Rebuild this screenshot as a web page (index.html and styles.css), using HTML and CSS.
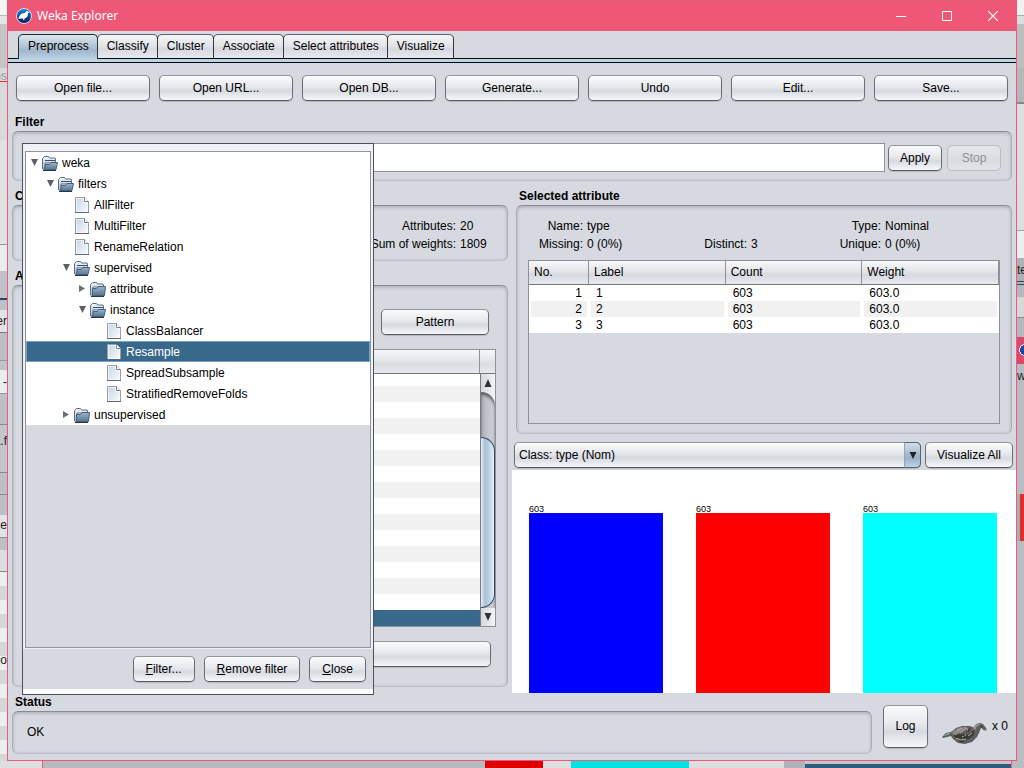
FILE: index.html
```html
<!DOCTYPE html>
<html lang="en">
<head>
<meta charset="utf-8">
<title>Weka Explorer</title>
<link rel="stylesheet" href="styles.css">
</head>
<body>
<svg width="0" height="0" class="defs" aria-hidden="true">
  <defs>
    <linearGradient id="gf" x1="0" y1="0" x2="0" y2="1"><stop offset="0" stop-color="#9db4cb"/><stop offset="1" stop-color="#587792"/></linearGradient>
    <linearGradient id="gb" x1="0" y1="0" x2="0" y2="1"><stop offset="0" stop-color="#f2f6fa"/><stop offset="1" stop-color="#a3b9cd"/></linearGradient>
    <linearGradient id="gp" x1="0" y1="0" x2="1" y2="1"><stop offset="0" stop-color="#c9d7e5"/><stop offset="1" stop-color="#f6f9fc"/></linearGradient>
    <linearGradient id="gw" x1="0" y1="0" x2="0" y2="1"><stop offset="0" stop-color="#1c8ae0"/><stop offset="1" stop-color="#0a1052"/></linearGradient>
  </defs>
  <symbol id="open" viewBox="0 0 16 16">
    <path d="M.5 14V3.500L2.500 1.500h4l1 1.500h5.500l.5 1V8H3v6.500z" fill="url(#gb)" stroke="#5b6f84"/>
    <path d="M3 5.500h10" stroke="#3c5166"/>
    <path d="M2.500 14.500L3.500 9.500h4l1.500-2h6.500l-1.500 7z" fill="url(#gf)" stroke="#48617a"/>
    <path d="M1 15.500h13" stroke="#22384e"/>
  </symbol>
  <symbol id="closed" viewBox="0 0 16 16">
    <path d="M.5 14V3.500L2.500 1.500h4l1 1.500h5.500l.5 1V6H3v8.500z" fill="url(#gb)" stroke="#5b6f84"/>
    <path d="M2.500 14.500V7.500h4l1.500-2h7.500l-1 9z" fill="url(#gf)" stroke="#48617a"/>
    <path d="M1 15.500h13" stroke="#22384e"/>
  </symbol>
  <symbol id="page" viewBox="0 0 16 16">
    <path d="M1.500.5h9l4 4v11h-13z" fill="#fff" stroke="#9a9fa8"/>
    <path d="M2.500 1.500h7v4h4v9h-11z" fill="url(#gp)"/>
    <path d="M10.500.5v4h4" fill="#fff" stroke="#7b818b"/>
    <path d="M1 15.500h14" stroke="#60656e"/>
  </symbol>
  <symbol id="down" viewBox="0 0 8 8"><path d="M1 0h7L4.500 7z" fill="#5e6066"/></symbol>
  <symbol id="right" viewBox="0 0 8 8"><path d="M1 0v7l6-3.500z" fill="#6c6e74"/></symbol>
</svg>
<div class="desktop">
  <div class="strip left" aria-hidden="true">
    <i class="l1"></i><i class="l2"></i><i class="l3"></i><i class="l4">os</i><i class="l5"></i><i class="l6"></i><i class="l7"></i><i class="l8">er</i><i class="l9">-</i><i class="l10">a.f</i><i class="l11">e</i><i class="l12"></i><i class="l13">io</i>
  </div>
  <main class="window">
    <header class="titlebar">
      <svg class="logo" viewBox="0 0 16 16"><circle cx="8" cy="8" r="7.500" fill="url(#gw)" stroke="#d9dbe8"/><path d="M3 9c1-3 3-4 6-4 1-2 2-2.500 3-1.500l2 1-2 .5c0 3-1 5-3.500 5.500L8 13l-1-2.500H5L2.500 11z" fill="#fff"/></svg>
      <h1>Weka Explorer</h1>
      <div class="winbtns">
        <button aria-label="Minimize"><svg viewBox="0 0 10 10"><path d="M0 5.500h10" stroke="#fff"/></svg></button>
        <button aria-label="Maximize"><svg viewBox="0 0 10 10"><path d="M.5.5h9v9h-9z" fill="none" stroke="#fff"/></svg></button>
        <button aria-label="Close window"><svg viewBox="0 0 10 10"><path d="M0 0l10 10M10 0L0 10" stroke="#fff" stroke-width="1.200"/></svg></button>
      </div>
    </header>
    <nav class="tabs">
      <button class="tab active">Preprocess</button><button class="tab">Classify</button><button class="tab">Cluster</button><button class="tab">Associate</button><button class="tab">Select attributes</button><button class="tab">Visualize</button>
    </nav>
    <div class="toolbar">
      <button class="btn">Open file...</button>
      <button class="btn">Open URL...</button>
      <button class="btn">Open DB...</button>
      <button class="btn">Generate...</button>
      <button class="btn">Undo</button>
      <button class="btn">Edit...</button>
      <button class="btn">Save...</button>
    </div>
    <section class="group filter">
      <h2>Filter</h2>
      <div class="box filterbox">
        <input class="field" type="text" aria-label="Filter">
        <button class="btn small">Apply</button>
        <button class="btn small" disabled>Stop</button>
      </div>
    </section>
    <div class="columns">
      <div class="col leftcol">
        <section class="group">
          <h2>Current relation</h2>
          <dl class="box facts relation">
            <dt>Attributes:</dt><dd>20</dd>
            <dt>Sum of weights:</dt><dd>1809</dd>
          </dl>
        </section>
        <section class="group grow">
          <h2>Attributes</h2>
          <div class="box attrs">
            <button class="btn pattern">Pattern</button>
            <div class="list">
              <div class="listhead"><span></span></div>
              <div class="listbody">
                <div class="rows"><div class="selected"></div></div>
                <div class="scroll">
                  <button class="arrow" aria-label="Scroll up"><svg viewBox="0 0 8 8"><path d="M.5 8h7L4 0z" fill="#333"/></svg></button>
                  <div class="track"><div class="thumb"></div></div>
                  <button class="arrow" aria-label="Scroll down"><svg viewBox="0 0 8 8"><path d="M.5 0h7L4 8z" fill="#333"/></svg></button>
                </div>
              </div>
            </div>
            <button class="btn remove" aria-label="Remove"></button>
          </div>
        </section>
      </div>
      <div class="col">
        <section class="group">
          <h2>Selected attribute</h2>
          <div class="box selbox">
            <dl class="facts info">
              <dt>Name:</dt><dd>type</dd><dt class="c5">Type:</dt><dd>Nominal</dd>
              <dt>Missing:</dt><dd>0 (0%)</dd><dt>Distinct:</dt><dd>3</dd><dt>Unique:</dt><dd>0 (0%)</dd>
            </dl>
            <div class="tablewrap">
              <table>
                <thead><tr><th class="no">No.</th><th>Label</th><th>Count</th><th>Weight</th></tr></thead>
                <tbody>
                  <tr><td>1</td><td>1</td><td>603</td><td>603.0</td></tr>
                  <tr><td>2</td><td>2</td><td>603</td><td>603.0</td></tr>
                  <tr><td>3</td><td>3</td><td>603</td><td>603.0</td></tr>
                </tbody>
              </table>
            </div>
          </div>
        </section>
        <div class="classrow">
          <div class="combo">
            <select aria-label="Class attribute"><option>Class: type (Nom)</option></select>
            <span class="comboarrow"><svg viewBox="0 0 8 8"><path d="M.5 1h7L4 8z" fill="#222"/></svg></span>
          </div>
          <button class="btn visall">Visualize All</button>
        </div>
        <div class="chart">
          <div class="bar blue"><span>603</span><i></i></div>
          <div class="bar red"><span>603</span><i></i></div>
          <div class="bar cyan"><span>603</span><i></i></div>
        </div>
      </div>
    </div>
    <footer class="footer">
      <section class="group status">
        <h2>Status</h2>
        <div class="box statusbox">OK</div>
      </section>
      <button class="btn log">Log</button>
      <svg class="bird" viewBox="0 0 46 22">
        <path d="M1 14l4-4 5-1 5-4 6-2 8 0 5 2 1-4 4-1 3 1 3 4 1 3-4-3-2 0-2 5-2 4-5 5-7 2-7-1-5-4-2-3-4 1-4 1z" fill="#5f5d5c"/>
        <path d="M11 9l6-4 6-1 5 1-5 2-5 3-5 3z" fill="#8b8987"/>
        <path d="M13 13l5-2 7 1 5-2 3-3 0 5-5 4-8 2z" fill="#3b3a39"/>
        <path d="M2 13l5-3 3 0-3 2zM34 2l3-1 4 1-5 1-2 4-2-2z" fill="#9a9895"/>
        <path d="M16 8l5-3M19 10l6-4M15 15l5 2 5-1M27 13l4-3M24 4l3 3M21 14l4-2" stroke="#b3b0ac" fill="none"/>
        <path d="M13 12l3 3M22 11l2 3M29 5l-2 4M18 18l5 1M39 2l3 4 2 1" stroke="#2a2928" fill="none"/>
      </svg>
      <span class="count">x 0</span>
    </footer>

    <div class="popup" role="dialog" aria-label="Choose filter">
      <div class="treepane">
        <ul class="tree" role="tree">
          <li class="d0"><svg class="tw"><use href="#down"/></svg><svg class="ic"><use href="#open"/></svg>weka</li>
          <li class="d1"><svg class="tw"><use href="#down"/></svg><svg class="ic"><use href="#open"/></svg>filters</li>
          <li class="d2"><svg class="tw"></svg><svg class="ic"><use href="#page"/></svg>AllFilter</li>
          <li class="d2"><svg class="tw"></svg><svg class="ic"><use href="#page"/></svg>MultiFilter</li>
          <li class="d2"><svg class="tw"></svg><svg class="ic"><use href="#page"/></svg>RenameRelation</li>
          <li class="d2"><svg class="tw"><use href="#down"/></svg><svg class="ic"><use href="#open"/></svg>supervised</li>
          <li class="d3"><svg class="tw"><use href="#right"/></svg><svg class="ic"><use href="#closed"/></svg>attribute</li>
          <li class="d3"><svg class="tw"><use href="#down"/></svg><svg class="ic"><use href="#open"/></svg>instance</li>
          <li class="d4"><svg class="tw"></svg><svg class="ic"><use href="#page"/></svg>ClassBalancer</li>
          <li class="d4 sel"><svg class="tw"></svg><svg class="ic"><use href="#page"/></svg>Resample</li>
          <li class="d4"><svg class="tw"></svg><svg class="ic"><use href="#page"/></svg>SpreadSubsample</li>
          <li class="d4"><svg class="tw"></svg><svg class="ic"><use href="#page"/></svg>StratifiedRemoveFolds</li>
          <li class="d2"><svg class="tw"><use href="#right"/></svg><svg class="ic"><use href="#closed"/></svg>unsupervised</li>
        </ul>
      </div>
      <div class="actions">
        <button class="btn"><u>F</u>ilter...</button>
        <button class="btn"><u>R</u>emove filter</button>
        <button class="btn"><u>C</u>lose</button>
      </div>
    </div>
  </main>
  <div class="strip right" aria-hidden="true">
    <i class="r1"></i><i class="r2"></i><i class="r3"></i><i class="r4"></i><i class="r5"></i><i class="r6"></i><i class="r7">te</i><i class="r8"></i><i class="r9"></i><i class="r10">w</i><i class="r11"></i>
  </div>
  <div class="under" aria-hidden="true">
    <i class="u1"></i><i class="u2"></i><i class="u3"></i><i class="u4"></i><i class="u5"></i><i class="u6"></i><i class="u7"></i><i class="u8"></i><i class="u9"></i>
  </div>
</div>
</body>
</html>
```
FILE: styles.css
```css
* { box-sizing: border-box; }
body { margin: 0; background: #d0d2d6; color: #000; font: 12px/16px "Liberation Sans", Arial, sans-serif; }
h1, h2, dl, dd, ul { margin: 0; padding: 0; font: inherit; }
button, input, select { font: inherit; color: inherit; padding: 0; margin: 0; }
.defs { position: absolute; }

.desktop { display: grid; grid-template-columns: 7px 1fr 7px; grid-template-rows: 1fr 7px; min-height: 100vh; overflow: hidden; }
.window { position: relative; display: flex; flex-direction: column; min-width: 0; background: #d6d9df; border: 1px solid #ee5a7a; border-top: 0; }

.titlebar { display: flex; align-items: center; height: 31px; padding-left: 8px; background: #ef5777; border-top: 1px solid #e0607a; color: #fff; }
.logo { width: 16px; height: 16px; margin-right: 5px; }
.titlebar h1 { flex: 1; font: 12px/16px "Noto Sans", "Open Sans", sans-serif; }
.winbtns { display: flex; }
.winbtns button { display: flex; align-items: center; justify-content: center; width: 46px; height: 28px; border: 0; background: none; }
.winbtns svg { width: 10px; height: 10px; }

.tabs { display: flex; padding: 3px 10px 0; height: 32px; background: linear-gradient(#d6d9df 27px, #000814 27px 28px, #bcd3e6 28px 31px, #000814 31px); }
.tab { height: 25px; padding: 0 8px 1px 9px; margin-right: -1px; border: 1px solid #33363c; border-top-color: #60646b; border-bottom-color: #000814; border-radius: 5px 5px 0 0; background: linear-gradient(#f4f5f7, #e3e5e9 45%, #d6d9df 60%, #e6e8ee); }
.tab.active { padding-bottom: 2px; border-color: #1c2c3c; border-bottom: 0; background: linear-gradient(#dbe5ed, #b4c6d5 45%, #a0b7cb 65%, #bcd3e6); }

.btn { height: 26px; padding: 0 10px; border: 1px solid #6c6f76; border-top-color: #93969d; border-bottom-color: #55585e; border-radius: 5px; background: linear-gradient(#fbfbfc, #e6e8ec 45%, #d6d9df 62%, #f6f8fb); box-shadow: 0 1px 1px #b4b7bd; white-space: nowrap; }
.btn:disabled { color: #8e9095; border-color: #b9bcc3; background: linear-gradient(#e4e6ea, #d9dce1 60%, #e2e4e8); box-shadow: none; }
.toolbar { display: grid; grid-template-columns: repeat(7, 1fr); gap: 9px; padding: 12px 8px 14px; }

.group { display: flex; flex-direction: column; gap: 2px; }
.group h2 { padding-left: 3px; font-weight: bold; line-height: 14px; }
.box { border: 1px solid #a9acb2; border-top-color: #888b91; border-bottom-color: #bdc0c6; border-radius: 6px; box-shadow: inset 0 2px 3px #b7bac1, inset 0 0 3px #babdc4; }
.filter { padding: 0 4px 8px; }
.filterbox { display: flex; height: 50px; padding: 11px 10px 0; }
.field { flex: 1; height: 29px; margin-right: 3px; border: 1px solid #8d9198; background: #fff; }
.btn.small { width: 54px; margin-top: 2px; padding: 0; }
.btn.small + .btn.small { margin-left: 5px; }

.columns { display: grid; grid-template-columns: 1fr 1fr; flex: 1; }
.col { display: flex; flex-direction: column; min-width: 0; }
.col .group { margin: 0 4px; }
.leftcol { gap: 8px; padding-bottom: 6px; }
.grow, .attrs { flex: 1; }
.facts { display: grid; column-gap: 4px; line-height: 18px; }
.facts dt { text-align: right; white-space: nowrap; }
.relation { grid-template-columns: 1fr 36px; padding: 11px 11px 7px; }
.attrs { display: flex; flex-direction: column; padding: 23px 11px 19px; }
.pattern { align-self: flex-end; width: 108px; margin-right: 7px; }
.list { display: flex; flex-direction: column; flex: 1; margin: 14px 0; border: 1px solid #8d9198; }
.listhead { display: flex; height: 24px; border-bottom: 1px solid #73777e; background: linear-gradient(#f8f8fa, #e3e5e9 45%, #d9dce1 60%, #e6e9ee); }
.listhead span { flex: 1; margin-right: 15px; border-right: 1px solid #8d9198; }
.listbody { display: flex; flex: 1; }
.rows { display: flex; flex-direction: column; justify-content: flex-end; flex: 1; background: repeating-linear-gradient(to top, #f1f1f1 0 16px, #fff 16px 32px); }
.selected { height: 16px; background: #39698a; }
.scroll { display: flex; flex-direction: column; width: 15px; border-left: 1px solid #777b82; background: linear-gradient(to right, #d6d9df, #f3f4f6); }
.arrow { display: flex; align-items: center; justify-content: center; height: 18px; border: 0; background: none; }
.arrow svg { width: 8px; height: 8px; }
.track { display: flex; flex-direction: column; justify-content: flex-end; flex: 1; border-radius: 0 14px 0 0; background: linear-gradient(to right, #b0b3ba, #d2d5da); box-shadow: inset 0 3px 3px #5d6067; }
.thumb { height: 79%; border: 1px solid #2f4a66; border-left: 0; border-radius: 0 14px 14px 0; background: linear-gradient(to right, #e9f0f6, #a9c0d6 30%, #bcd0e2 60%, #e2f0f8); }
.remove { margin-right: 5px; }

.selbox { padding: 11px 11px 9px; }
.info { grid-template-columns: 55px 100fr 56px 70fr 56px 115fr; margin-bottom: 7px; }
.info .c5 { grid-column: 5; }
.tablewrap { height: 164px; border: 1px solid #8d9198; }
table { width: 100%; table-layout: fixed; border-collapse: separate; border-spacing: 0; background: #fff; }
th { height: 24px; padding: 0 0 2px 5px; border-right: 1px solid #8d9198; border-bottom: 1px solid #73777e; background: linear-gradient(#f8f8fa, #e3e5e9 45%, #d6d9df 60%, #e6e9ee); font-weight: normal; text-align: left; }
.no { width: 60px; }
td { height: 16px; padding: 0 5px; border: solid #fff; border-width: 0 2px; line-height: 16px; }
td:first-child { text-align: right; }
tr:nth-child(even) td { background: #f1f1f1; }

.classrow { display: flex; gap: 4px; padding: 8px 3px 2px 2px; }
.combo { position: relative; flex: 1; }
.combo select { appearance: none; display: block; width: 100%; height: 26px; padding-left: 4px; border: 1px solid #6c6f76; border-top-color: #93969d; border-bottom-color: #55585e; border-radius: 5px; background: linear-gradient(#fbfbfc, #e3e5e9 45%, #d6d9df 62%, #f3f5f8); box-shadow: 0 1px 1px #b4b7bd; }
.comboarrow { position: absolute; top: 0; right: 0; bottom: 0; display: flex; align-items: center; justify-content: center; width: 17px; border: 1px solid #4d6880; border-left-color: #8ea6bb; border-radius: 0 5px 5px 0; background: linear-gradient(#d3dee8, #a4bace 50%, #98b1c8 62%, #bdd2e4); pointer-events: none; }
.comboarrow svg { width: 8px; height: 8px; }
.visall { width: 88px; padding: 0; }
.chart { display: grid; grid-template-columns: repeat(3, 1fr); gap: 33px; flex: 1; min-height: 223px; padding: 33px 19px 0 17px; background: #fff; }
.bar { display: flex; flex-direction: column; }
.bar span { height: 10px; font: 9px/12px "Liberation Sans", Arial, sans-serif; }
.bar i { flex: 1; }
.blue i { background: #00f; }
.red i { background: #f00; }
.cyan i { background: #0ff; }

.footer { display: flex; align-items: flex-start; height: 67px; padding: 2px 8px 0 4px; }
.status { flex: 1; }
.statusbox { height: 43px; padding: 12px 14px; }
.log { width: 45px; height: 43px; margin: 10px 13px 0 11px; padding: 0 0 2px; }
.bird { width: 46px; height: 22px; margin-top: 28px; }
.count { margin: 23px 0 0 5px; }

.popup { position: absolute; left: 14px; top: 143px; display: flex; flex-direction: column; width: 352px; height: 552px; padding: 7px 2px 0; border: 1px solid #4e5157; background: linear-gradient(#f1f2f5 505px, #d6d9df 505px 545px, #fafbfc 545px); }
.treepane { height: 497px; border: 1px solid #8f929f; background: #d6d9df; }
.tree { list-style: none; background: #fff; }
.tree li { display: flex; align-items: center; gap: 4px; height: 21px; }
.tw { width: 8px; height: 8px; }
.ic { width: 16px; height: 16px; }
.tree .d0 { padding-left: 4px; }
.tree .d1 { padding-left: 20px; }
.tree .d2 { padding-left: 36px; }
.tree .d3 { padding-left: 52px; }
.tree .d4 { padding-left: 68px; }
.tree .sel { color: #fff; background: #39698a; box-shadow: inset 0 0 0 1px #73a4d1; }
.actions { display: flex; justify-content: flex-end; gap: 9px; padding: 8px 5px; }
.actions .btn { padding: 0 12px; }

.strip { display: flex; flex-direction: column; overflow: hidden; font-size: 12px; line-height: 16px; }
.strip i { display: flex; flex: none; overflow: hidden; font-style: normal; color: #222; }
.left { background: linear-gradient(to right, #f4f4f4, #d4d4d6); }
.left i { justify-content: flex-end; }
.l1 { height: 16px; background: #f6f6f6; border-bottom: 1px solid #b9b9b9; }
.l2 { height: 8px; background: #e4e4e4; }
.l3 { height: 44px; background: #c6c6c6; }
.strip .l4 { height: 72px; color: #999; background: linear-gradient(#d9d9d9 13px, #e03030 13px 14px, #d9d9d9 14px); }
.l5 { height: 105px; background: #e2e2e2; border-bottom: 1px solid #999; }
.l6 { height: 26px; background: #ececec; }
.l7 { height: 29px; background: #bfc2c8; border-bottom: 2px solid #31465a; }
.l8 { height: 70px; padding-top: 13px; background: linear-gradient(#bcbfc6 10px, #e3e4e8 10px 32px, #777b80 32px 33px, #bcbfc6 33px 60px, #999 60px 61px, #c0c3c9 61px); }
.l9 { height: 24px; padding-top: 4px; background: #ececec; border-bottom: 1px solid #999; }
.l10 { height: 121px; padding-top: 39px; background: linear-gradient(#bcbfc6 30px, #888 30px 31px, #c3c6cc 31px 78px, #888 78px 79px, #bcbfc6 79px 100px, #888 100px 101px, #bcbfc6 101px); }
.l11 { height: 23px; padding-top: 2px; background: #e3e4e8; border-bottom: 1px solid #888; }
.l12 { height: 34px; background: linear-gradient(#bcbfc6 12px, #dcdde1 12px 33px, #888 33px); }
.l13 { height: 189px; padding-top: 80px; background: repeating-linear-gradient(#eee 0 14px, #d7d7d7 14px 28px); }
.right { background: #b9bcc1; }
.r1 { height: 16px; background: #f1f1f1; border-bottom: 1px solid #aaa; }
.r2 { height: 8px; background: #ddd; }
.r3 { height: 44px; background: #bebebe; }
.r4 { height: 36px; background: #b5b7ba; border-bottom: 2px solid #85878a; }
.r5 { height: 127px; background: #dedede; border-bottom: 1px solid #a5a5a5; }
.r6 { height: 27px; background: #eee; }
.r7 { height: 27px; padding-top: 4px; background: #aeb1b6; border-bottom: 4px double #34495c; }
.r8 { height: 52px; background: linear-gradient(#b4b7bc 12px, #d7d8da 12px 32px, #888 32px 33px, #b4b7bc 33px); }
.r9 { height: 27px; background: radial-gradient(circle at 8px 13px, #1646a0 5px, #dfe3ee 5px 6px, #d84a6a 6px); }
.r10 { height: 130px; padding-top: 4px; background: #b9bcc1; }
.r11 { height: 47px; background: linear-gradient(to right, #a9acb1 3px, #dc3030 3px); }
.under { display: flex; grid-column: 1 / -1; }
.u1 { flex: 42; background: #dededf; border-right: 1px solid #ee5a7a; }
.u2 { flex: 443; background: #b6b9be; }
.u3 { flex: 58; background: #de0000; }
.u4 { flex: 28; background: #dededf; }
.u5 { flex: 118; background: #00e2e2; }
.u6 { flex: 96; background: #dddddf; }
.u7 { flex: 21; background: #afb2b8; }
.u8 { flex: 206; background: linear-gradient(#c3c6cb 3px, #2f5c7c 3px); border-right: 1px solid #ee5a7a; }
.u9 { flex: 12; background: #b9bcc1; }
```
